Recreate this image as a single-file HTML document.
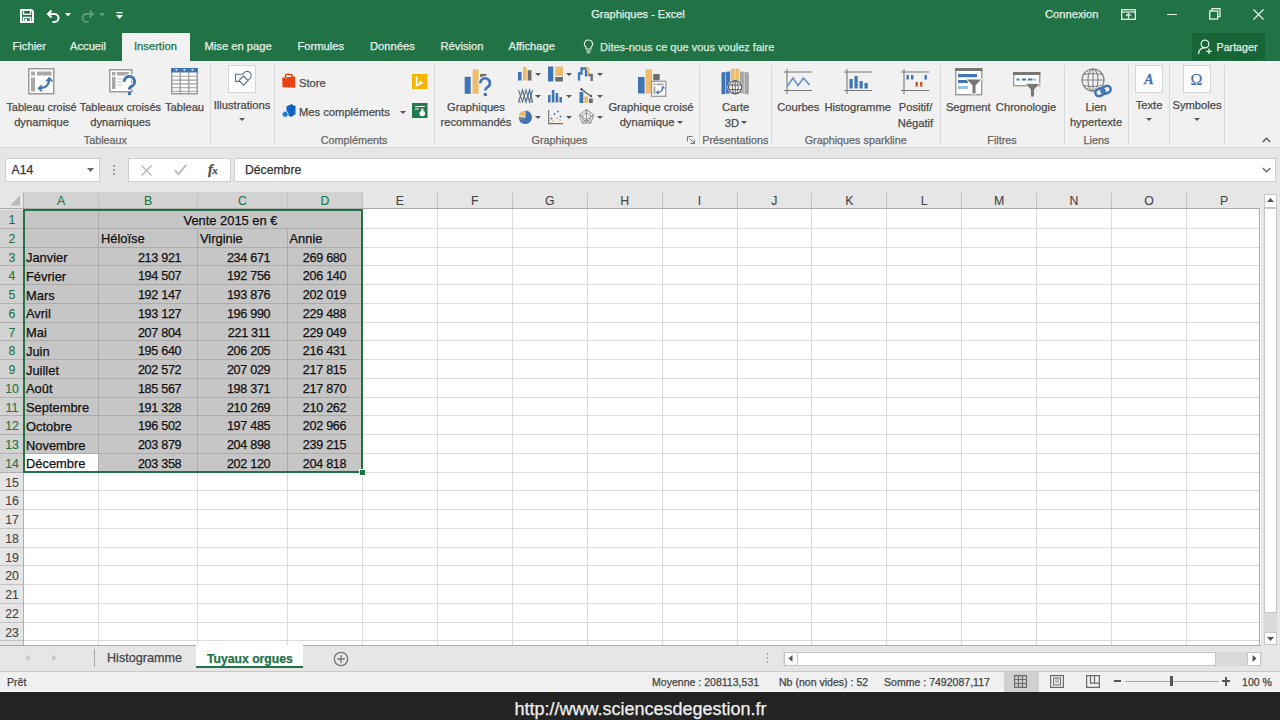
<!DOCTYPE html>
<html><head><meta charset="utf-8"><title>Graphiques - Excel</title>
<style>
html,body{margin:0;padding:0;}
body{width:1280px;height:720px;overflow:hidden;position:relative;background:#E6E6E6;font-family:"Liberation Sans",sans-serif;}
.t{position:absolute;white-space:nowrap;line-height:1.24;-webkit-text-stroke:0.25px currentColor;}
.r{position:absolute;}
svg.r{overflow:visible;}
</style></head><body>
<div class="r" style="left:0px;top:0px;width:1280px;height:61px;background:#217346;"></div>
<div class="r" style="left:0px;top:61px;width:1280px;height:86.5px;background:#F1F1F1;"></div>
<div class="r" style="left:0px;top:147px;width:1280px;height:1.2px;background:#D8D8D8;"></div>
<div class="r" style="left:0px;top:148.2px;width:1280px;height:44px;background:#E6E6E6;"></div>
<svg class="r" style="left:20px;top:9px" width="14" height="14" viewBox="0 0 14 14"><path d="M1 1h10.5l1.5 1.5V13H1z" fill="none" stroke="#fff" stroke-width="1.9"/><rect x="3.5" y="1" width="7" height="4.3" fill="none" stroke="#fff" stroke-width="1.3"/><path d="M3.5 13V8.5h7V13" fill="none" stroke="#fff" stroke-width="1.6"/><rect x="5" y="10" width="2" height="2.5" fill="#fff"/></svg>
<svg class="r" style="left:46px;top:8px" width="16" height="16" viewBox="0 0 16 16"><path d="M5.5 2.5L2 6l3.5 3.5" fill="none" stroke="#fff" stroke-width="2"/><path d="M2.5 6h6a4 4 0 0 1 0 8H6.5" fill="none" stroke="#fff" stroke-width="2"/></svg>
<svg class="r" style="left:65px;top:13px" width="6" height="4" viewBox="0 0 6 4"><path d="M0 0h6L3 3.5z" fill="#fff"/></svg>
<svg class="r" style="left:79px;top:8px" width="16" height="16" viewBox="0 0 16 16"><path d="M10.5 2.5L14 6l-3.5 3.5" fill="none" stroke="#5E9A77" stroke-width="2"/><path d="M13.5 6h-6a4 4 0 0 0 0 8H9.5" fill="none" stroke="#5E9A77" stroke-width="2"/></svg>
<svg class="r" style="left:99px;top:13px" width="6" height="4" viewBox="0 0 6 4"><path d="M0 0h6L3 3.5z" fill="#5E9A77"/></svg>
<svg class="r" style="left:116px;top:12px" width="7" height="8" viewBox="0 0 7 8"><rect x="0.5" y="0" width="6" height="1.3" fill="#fff"/><path d="M0 3h7L3.5 7z" fill="#fff"/></svg>
<div class="t" style="left:488.00px;width:300px;text-align:center;top:7.68px;font-size:11.0px;color:#E3F1E8;font-weight:400;">Graphiques - Excel</div>
<div class="t" style="left:1045px;top:7.56px;font-size:11.2px;color:#E3F1E8;font-weight:400;">Connexion</div>
<svg class="r" style="left:1121px;top:9px" width="15" height="11" viewBox="0 0 15 11"><rect x="0.7" y="0.7" width="13.6" height="9.6" fill="none" stroke="#E3F1E8" stroke-width="1.3"/><path d="M1 3h13" stroke="#E3F1E8" stroke-width="1.2"/><path d="M7.5 9.5V4.5M5 7l2.5-2.5L10 7" fill="none" stroke="#E3F1E8" stroke-width="1.2"/></svg>
<div class="r" style="left:1167px;top:14px;width:10px;height:1.3px;background:#E3F1E8;"></div>
<svg class="r" style="left:1209px;top:8px" width="12" height="12" viewBox="0 0 12 12"><rect x="0.7" y="3" width="8" height="8" fill="none" stroke="#E3F1E8" stroke-width="1.3"/><path d="M3 3V0.7h8V8.7H8.7" fill="none" stroke="#E3F1E8" stroke-width="1.3"/></svg>
<svg class="r" style="left:1253px;top:9px" width="11" height="11" viewBox="0 0 11 11"><path d="M0.5 0.5l10 10M10.5 0.5l-10 10" stroke="#E3F1E8" stroke-width="1.3"/></svg>
<div class="r" style="left:122px;top:33px;width:68px;height:28px;background:#F1F1F1;"></div>
<div class="t" style="left:12.5px;top:40.46px;font-size:11.2px;color:#E3F1E8;font-weight:400;">Fichier</div>
<div class="t" style="left:70px;top:40.46px;font-size:11.2px;color:#E3F1E8;font-weight:400;">Accueil</div>
<div class="t" style="left:134px;top:40.46px;font-size:11.2px;color:#217346;font-weight:400;">Insertion</div>
<div class="t" style="left:204.5px;top:40.46px;font-size:11.2px;color:#E3F1E8;font-weight:400;">Mise en page</div>
<div class="t" style="left:297.5px;top:40.46px;font-size:11.2px;color:#E3F1E8;font-weight:400;">Formules</div>
<div class="t" style="left:370px;top:40.46px;font-size:11.2px;color:#E3F1E8;font-weight:400;">Données</div>
<div class="t" style="left:440.5px;top:40.46px;font-size:11.2px;color:#E3F1E8;font-weight:400;">Révision</div>
<div class="t" style="left:508.5px;top:40.46px;font-size:11.2px;color:#E3F1E8;font-weight:400;">Affichage</div>
<svg class="r" style="left:583px;top:39px" width="11" height="15" viewBox="0 0 11 15"><path d="M5.5 1a4 4 0 0 0-2.5 7.2V10h5V8.2A4 4 0 0 0 5.5 1z" fill="none" stroke="#E3F1E8" stroke-width="1.1"/><path d="M3.2 12h4.6M3.8 13.8h3.4" stroke="#E3F1E8" stroke-width="1.1"/></svg>
<div class="t" style="left:600px;top:40.58px;font-size:11.0px;color:#D8EBDF;font-weight:400;">Dites-nous ce que vous voulez faire</div>
<div class="r" style="left:1192px;top:33px;width:73px;height:27px;background:#176436;"></div>
<svg class="r" style="left:1197px;top:38px" width="17" height="17" viewBox="0 0 17 17"><circle cx="8" cy="6" r="3.8" fill="none" stroke="#E3F1E8" stroke-width="1.3"/><path d="M1.5 16c0-4 3-6.5 6.5-6.5" fill="none" stroke="#E3F1E8" stroke-width="1.3"/><path d="M12 10.5v5.5M9.2 13.3h5.6" stroke="#E3F1E8" stroke-width="1.3"/></svg>
<div class="t" style="left:1216.5px;top:41.37px;font-size:10.7px;color:#E3F1E8;font-weight:400;">Partager</div>
<svg class="r" style="left:28px;top:68px" width="27" height="27" viewBox="0 0 27 27"><rect x="0.75" y="0.75" width="25" height="25" fill="#fff" stroke="#9B9B9B" stroke-width="1.5"/><rect x="3" y="3.5" width="4" height="4" fill="#A8A8A8"/><rect x="9" y="3.5" width="14.5" height="4" fill="#A8A8A8"/><rect x="3" y="9.5" width="4" height="14" fill="#A8A8A8"/><path d="M11 20.3Q21.3 20.3 21.3 10.5" fill="none" stroke="#3F74B5" stroke-width="1.9"/><path d="M18.3 13.3l3-3.3 3 3.3M14 17.3l-3.2 3 3.2 3" fill="none" stroke="#3F74B5" stroke-width="1.8"/></svg>
<div class="t" style="left:-108.50px;width:300px;text-align:center;top:101.24px;font-size:10.9px;color:#4A4A4A;font-weight:400;">Tableau croisé</div>
<div class="t" style="left:-108.50px;width:300px;text-align:center;top:116.06px;font-size:11.2px;color:#4A4A4A;font-weight:400;">dynamique</div>
<svg class="r" style="left:109px;top:69px" width="28" height="28" viewBox="0 0 28 28"><rect x="0.75" y="0.75" width="22" height="22" fill="#fff" stroke="#9B9B9B" stroke-width="1.5"/><rect x="3" y="3" width="3.5" height="3.5" fill="#A8A8A8"/><rect x="8" y="3" width="12" height="3.5" fill="#A8A8A8"/><rect x="3" y="8" width="3.5" height="12" fill="#A8A8A8"/><path d="M8 10h6M8 13h5M8 16h5" stroke="#C8C8C8" stroke-width="1"/><path d="M15.2 12.8a5.2 5.2 0 1 1 7.6 4.4c-1.7 .9-2.4 1.6-2.4 3.3" fill="none" stroke="#fff" stroke-width="5"/><path d="M15.2 12.8a5.2 5.2 0 1 1 7.6 4.4c-1.7 .9-2.4 1.6-2.4 3.3" fill="none" stroke="#3F74B5" stroke-width="3"/><rect x="18.9" y="23" width="3.1" height="3.1" fill="#3F74B5"/></svg>
<div class="t" style="left:-29.60px;width:300px;text-align:center;top:101.24px;font-size:10.9px;color:#4A4A4A;font-weight:400;">Tableaux croisés</div>
<div class="t" style="left:-29.60px;width:300px;text-align:center;top:116.06px;font-size:11.2px;color:#4A4A4A;font-weight:400;">dynamiques</div>
<svg class="r" style="left:171px;top:68px" width="27" height="27" viewBox="0 0 27 27"><rect x="0.75" y="0.75" width="25.5" height="25" fill="#fff" stroke="#9B9B9B" stroke-width="1.5"/><rect x="0" y="0" width="27" height="4.5" fill="#3F74B5"/><path d="M4 1.2h3L5.5 3zM12 1.2h3L13.5 3zM20 1.2h3L21.5 3z" fill="#fff"/><path d="M9.2 4.5V26M17.8 4.5V26" stroke="#9B9B9B" stroke-width="1.3"/><path d="M0 8.3h27M0 12.1h27M0 15.9h27M0 19.7h27M0 23.3h27" stroke="#9B9B9B" stroke-width="1.1"/></svg>
<div class="t" style="left:34.50px;width:300px;text-align:center;top:101.06px;font-size:11.2px;color:#4A4A4A;font-weight:400;">Tableau</div>
<div class="t" style="left:-44.60px;width:300px;text-align:center;top:134.30px;font-size:10.8px;color:#666666;font-weight:400;">Tableaux</div>
<div class="r" style="left:210px;top:65px;width:1px;height:79px;background:#D8D8D8;"></div>
<div class="r" style="left:228px;top:65px;width:28px;height:27.5px;background:#FDFDFD;box-sizing:border-box;border:1px solid #D4D4D4;"></div>
<svg class="r" style="left:233px;top:70px" width="18" height="18" viewBox="0 0 18 18"><path d="M7.5 11.5H2.5V4.3h7.2" fill="none" stroke="#56708F" stroke-width="1.1"/><path d="M9.8 4.6A4.3 4.3 0 1 1 15.2 9.8" fill="none" stroke="#56708F" stroke-width="1.1"/><path d="M10.5 6l4.6 4.6-4.6 4.6-4.6-4.6z" fill="none" stroke="#56708F" stroke-width="1.1"/></svg>
<div class="t" style="left:92.00px;width:300px;text-align:center;top:99.36px;font-size:11.2px;color:#4A4A4A;font-weight:400;">Illustrations</div>
<svg class="r" style="left:239px;top:118.0px" width="6" height="4" viewBox="0 0 6 4"><path d="M0 0h6L3 3z" fill="#555"/></svg>
<div class="r" style="left:274px;top:65px;width:1px;height:79px;background:#D8D8D8;"></div>
<svg class="r" style="left:282px;top:73px" width="14" height="16" viewBox="0 0 14 16"><path d="M3.5 5V2.8Q3.8 0.8 6 1.2l3 0.6Q11 2.3 10.8 4.5V5" fill="none" stroke="#EB3C00" stroke-width="1.4"/><path d="M0.2 4.8L13 3.5 13.3 14.8 0.5 14.3z" fill="#E8430E"/><path d="M3.5 5.5l1.5-0.2" stroke="#F7A07A" stroke-width="1"/></svg>
<div class="t" style="left:299px;top:76.66px;font-size:11.2px;color:#4A4A4A;font-weight:400;">Store</div>
<svg class="r" style="left:282px;top:104px" width="14" height="14" viewBox="0 0 14 14"><path d="M4.5 2.2L9.5 0.3 13.5 2.3V10.3L9.5 12.8 4.5 11z" fill="#1168C4"/><path d="M9.5 0.3V6.5L13.5 2.3M9.5 6.5V12.8" stroke="#0A4F9A" stroke-width="0.6" fill="none"/><circle cx="3.2" cy="10.3" r="3" fill="#1A7AD8" stroke="#F1F1F1" stroke-width="0.8"/></svg>
<div class="t" style="left:299px;top:105.86px;font-size:11.2px;color:#4A4A4A;font-weight:400;">Mes compléments</div>
<svg class="r" style="left:399.5px;top:110.5px" width="6" height="4" viewBox="0 0 6 4"><path d="M0 0h6L3 3z" fill="#555"/></svg>
<svg class="r" style="left:412px;top:74px" width="16" height="15" viewBox="0 0 16 15"><rect x="0" y="0" width="15.5" height="15" fill="#F4B400"/><path d="M4.6 2.5v9.3l5.6-3-3-1.3" fill="none" stroke="#fff" stroke-width="1.7" stroke-linejoin="round"/></svg>
<svg class="r" style="left:412px;top:103px" width="16" height="15" viewBox="0 0 16 15"><rect x="0" y="0" width="15.5" height="15" fill="#1F7C4A"/><path d="M3 3.5h10M3 6h4" stroke="#fff" stroke-width="1.2"/><circle cx="10.3" cy="10.5" r="2.8" fill="#fff"/><circle cx="10.3" cy="6.7" r="1.3" fill="#fff"/></svg>
<div class="t" style="left:204.00px;width:300px;text-align:center;top:134.00px;font-size:10.8px;color:#666666;font-weight:400;">Compléments</div>
<div class="r" style="left:434px;top:65px;width:1px;height:79px;background:#D8D8D8;"></div>
<svg class="r" style="left:464px;top:69px" width="28" height="28" viewBox="0 0 28 28"><rect x="0.7" y="7.8" width="6" height="17" fill="#3F74B5"/><rect x="8.6" y="0.5" width="6" height="24.3" fill="#EDBB6A"/><rect x="16.2" y="4.9" width="6" height="3.5" fill="#6E6E6E"/><path d="M16.3 14.2a4.8 4.8 0 1 1 7.3 4c-1.6 .9-2.3 1.6-2.3 3.2" fill="none" stroke="#F1F1F1" stroke-width="4.6"/><path d="M16.3 14.2a4.8 4.8 0 1 1 7.3 4c-1.6 .9-2.3 1.6-2.3 3.2" fill="none" stroke="#3F74B5" stroke-width="2.6"/><rect x="19.8" y="24" width="3" height="3" fill="#3F74B5"/></svg>
<div class="t" style="left:326.00px;width:300px;text-align:center;top:101.06px;font-size:11.2px;color:#4A4A4A;font-weight:400;">Graphiques</div>
<div class="t" style="left:326.00px;width:300px;text-align:center;top:116.06px;font-size:11.2px;color:#4A4A4A;font-weight:400;">recommandés</div>
<svg class="r" style="left:518px;top:66px" width="16" height="16" viewBox="0 0 16 16"><rect x="0" y="6" width="3.6" height="8.5" fill="#3F74B5"/><rect x="5" y="1" width="3.7" height="13.5" fill="#EDBB6A"/><rect x="9.7" y="4.2" width="3.8" height="10.3" fill="#6E6E6E"/></svg>
<svg class="r" style="left:535.3px;top:72.5px" width="6" height="4" viewBox="0 0 6 4"><path d="M0 0h6L3 3z" fill="#555"/></svg>
<svg class="r" style="left:548px;top:66px" width="16" height="16" viewBox="0 0 16 16"><rect x="0" y="0.5" width="5.3" height="15" fill="#3F74B5"/><rect x="7.3" y="0.5" width="7.7" height="9.3" fill="#EDBB6A"/><rect x="7.3" y="11" width="7.7" height="4.5" fill="#6E6E6E"/></svg>
<svg class="r" style="left:566.4px;top:72.5px" width="6" height="4" viewBox="0 0 6 4"><path d="M0 0h6L3 3z" fill="#555"/></svg>
<svg class="r" style="left:579px;top:66px" width="16" height="16" viewBox="0 0 16 16"><path d="M0 14.5V7.5h2.5v-5h4.5v8" fill="none" stroke="#3F74B5" stroke-width="2.3"/><path d="M7 2.5h2.2v7.5" fill="none" stroke="#EDBB6A" stroke-width="2.3"/><path d="M9.5 9h3.2v6" fill="none" stroke="#6E6E6E" stroke-width="2.3"/></svg>
<svg class="r" style="left:597.3px;top:72.5px" width="6" height="4" viewBox="0 0 6 4"><path d="M0 0h6L3 3z" fill="#555"/></svg>
<svg class="r" style="left:518px;top:88px" width="16" height="16" viewBox="0 0 16 16"><path d="M0.5 14L4.5 2 8 14 11.5 2 14.5 14" fill="none" stroke="#3F74B5" stroke-width="1.2"/><path d="M0.5 2L4.5 14 8 2 11.5 14 14.5 2" fill="none" stroke="#6E6E6E" stroke-width="1.1"/><path d="M0 14h3M12 14h3" stroke="#6E6E6E" stroke-width="1"/></svg>
<svg class="r" style="left:535.3px;top:94.5px" width="6" height="4" viewBox="0 0 6 4"><path d="M0 0h6L3 3z" fill="#555"/></svg>
<svg class="r" style="left:548px;top:88px" width="16" height="16" viewBox="0 0 16 16"><rect x="0" y="7" width="2.6" height="7.5" fill="#3F74B5"/><rect x="3.8" y="2" width="2.6" height="12.5" fill="#3F74B5"/><rect x="7.6" y="5" width="2.6" height="9.5" fill="#3F74B5"/><rect x="11.4" y="9" width="2.6" height="5.5" fill="#3F74B5"/></svg>
<svg class="r" style="left:566.4px;top:94.5px" width="6" height="4" viewBox="0 0 6 4"><path d="M0 0h6L3 3z" fill="#555"/></svg>
<svg class="r" style="left:579px;top:88px" width="16" height="16" viewBox="0 0 16 16"><rect x="0.5" y="4" width="3.8" height="11" fill="#3F74B5"/><rect x="5.3" y="8.5" width="3.8" height="6.5" fill="#EDBB6A"/><rect x="10" y="10.5" width="3.8" height="4.5" fill="#6E6E6E"/><path d="M2.5 1.2L8 5.5 12 8" fill="none" stroke="#555" stroke-width="1.2"/><circle cx="2.5" cy="1.2" r="1.2" fill="#555"/><circle cx="12" cy="8" r="1.2" fill="#555"/></svg>
<svg class="r" style="left:597.3px;top:94.5px" width="6" height="4" viewBox="0 0 6 4"><path d="M0 0h6L3 3z" fill="#555"/></svg>
<svg class="r" style="left:518px;top:109px" width="16" height="16" viewBox="0 0 16 16"><path d="M7.5 1.5A6.8 6.8 0 1 1 1.2 11.5L7.5 8.3z" fill="#3F74B5"/><path d="M7 1.5A6.5 6.5 0 0 0 0.8 7.3H7z" fill="#EDBB6A"/><path d="M0.8 8.3h6L1.5 11.2A6.5 6.5 0 0 1 0.8 8.3z" fill="#6E6E6E"/></svg>
<svg class="r" style="left:535.3px;top:115.5px" width="6" height="4" viewBox="0 0 6 4"><path d="M0 0h6L3 3z" fill="#555"/></svg>
<svg class="r" style="left:548px;top:109px" width="16" height="16" viewBox="0 0 16 16"><path d="M0.7 1v13.6H15" fill="none" stroke="#6E6E6E" stroke-width="1.1"/><circle cx="3.5" cy="9.5" r="0.9" fill="#3F74B5"/><circle cx="6.5" cy="5" r="0.9" fill="#3F74B5"/><circle cx="10" cy="2.5" r="0.9" fill="#3F74B5"/><circle cx="12.5" cy="7.5" r="0.9" fill="#3F74B5"/><circle cx="5" cy="11.5" r="0.9" fill="#EDBB6A"/><circle cx="9" cy="9" r="0.9" fill="#EDBB6A"/><circle cx="12" cy="11" r="0.9" fill="#EDBB6A"/></svg>
<svg class="r" style="left:566.4px;top:115.5px" width="6" height="4" viewBox="0 0 6 4"><path d="M0 0h6L3 3z" fill="#555"/></svg>
<svg class="r" style="left:579px;top:109px" width="16" height="16" viewBox="0 0 16 16"><path d="M7.5 0.5L14.5 5.8 11.8 14H3.2L0.5 5.8z" fill="none" stroke="#888" stroke-width="1"/><path d="M7.5 0.5V14M0.5 5.8L11.8 14M14.5 5.8L3.2 14M7.5 3.5l4.5 3.3-1.7 4.8H4.7L3 6.8z" fill="none" stroke="#888" stroke-width="0.9"/></svg>
<svg class="r" style="left:597.3px;top:115.5px" width="6" height="4" viewBox="0 0 6 4"><path d="M0 0h6L3 3z" fill="#555"/></svg>
<svg class="r" style="left:637px;top:68px" width="30" height="30" viewBox="0 0 30 30"><rect x="1" y="9" width="6.6" height="16.5" fill="#3F74B5"/><rect x="8.7" y="1.3" width="6.4" height="24.2" fill="#EDBB6A"/><rect x="16.2" y="6" width="6.5" height="6.3" fill="#6E6E6E"/><rect x="14.6" y="13.3" width="14.2" height="15" fill="#fff" stroke="#9B9B9B" stroke-width="1.3"/><rect x="16.5" y="15.3" width="2" height="2" fill="#A8A8A8"/><rect x="19.5" y="15.3" width="7" height="2" fill="#A8A8A8"/><rect x="16.5" y="18.5" width="2" height="7.5" fill="#A8A8A8"/><path d="M20 24.5c3 0 5.5-1.5 6-5" fill="none" stroke="#3F74B5" stroke-width="1.3"/><path d="M24.5 20.5l1.5-2 1.5 2M21.5 22.8l-1.8 1.7 1.8 1.5" fill="none" stroke="#3F74B5" stroke-width="1.2"/></svg>
<div class="t" style="left:501.00px;width:300px;text-align:center;top:101.06px;font-size:11.2px;color:#4A4A4A;font-weight:400;">Graphique croisé</div>
<div class="t" style="left:497.00px;width:300px;text-align:center;top:116.06px;font-size:11.2px;color:#4A4A4A;font-weight:400;">dynamique</div>
<svg class="r" style="left:676.5px;top:120.5px" width="6" height="4" viewBox="0 0 6 4"><path d="M0 0h6L3 3z" fill="#555"/></svg>
<div class="t" style="left:409.50px;width:300px;text-align:center;top:134.30px;font-size:10.8px;color:#666666;font-weight:400;">Graphiques</div>
<svg class="r" style="left:687px;top:136px" width="8" height="8" viewBox="0 0 8 8"><path d="M0.5 0.5h5M0.5 0.5v5" stroke="#777" stroke-width="1"/><path d="M2.5 2.5l5 5M7.5 3.5v4h-4" fill="none" stroke="#777" stroke-width="1"/></svg>
<div class="r" style="left:699px;top:65px;width:1px;height:79px;background:#D8D8D8;"></div>
<svg class="r" style="left:721px;top:68px" width="29" height="28" viewBox="0 0 29 28"><path d="M0.5 4.5L9.2 3.2V25.2L0.5 26.5z" fill="#3F74B5"/><path d="M4.6 4v22" stroke="#A9CBEA" stroke-width="0.9"/><path d="M10 0.8h8.3V24H10z" fill="#EDBB6A"/><path d="M14 0.8v23" stroke="#F6DDA8" stroke-width="0.9"/><path d="M19 3.2L27.8 4.5V26.5L19 25.2z" fill="#A6A6A6"/><path d="M23.3 4v22" stroke="#D6D6D6" stroke-width="0.9"/><circle cx="14.2" cy="19.3" r="7.8" fill="#F1F1F1"/><circle cx="14.2" cy="19.3" r="6.6" fill="#fff" stroke="#5F5F5F" stroke-width="1.3"/><ellipse cx="14.2" cy="19.3" rx="2.9" ry="6.6" fill="none" stroke="#5F5F5F" stroke-width="1"/><path d="M7.8 17h12.8M7.8 21.6h12.8M14.2 12.7v13.2" stroke="#5F5F5F" stroke-width="1"/></svg>
<div class="t" style="left:585.60px;width:300px;text-align:center;top:101.06px;font-size:11.2px;color:#4A4A4A;font-weight:400;">Carte</div>
<div class="t" style="left:582.00px;width:300px;text-align:center;top:116.56px;font-size:11.2px;color:#4A4A4A;font-weight:400;">3D</div>
<svg class="r" style="left:740.5px;top:121.0px" width="6" height="4" viewBox="0 0 6 4"><path d="M0 0h6L3 3z" fill="#555"/></svg>
<div class="t" style="left:585.30px;width:300px;text-align:center;top:134.00px;font-size:10.8px;color:#666666;font-weight:400;">Présentations</div>
<div class="r" style="left:771px;top:65px;width:1px;height:79px;background:#D8D8D8;"></div>
<svg class="r" style="left:784px;top:69px" width="29" height="26" viewBox="0 0 29 26"><path d="M3 0v25M0 3h28M0 21.5h28" stroke="#777" stroke-width="1.1"/><path d="M3.5 17l5.5-8 5 7.5 5.5-7.5 6 7" fill="none" stroke="#5B8BC9" stroke-width="1.4"/></svg>
<div class="t" style="left:648.30px;width:300px;text-align:center;top:101.06px;font-size:11.2px;color:#4A4A4A;font-weight:400;">Courbes</div>
<svg class="r" style="left:844px;top:69px" width="29" height="26" viewBox="0 0 29 26"><path d="M3 0v25M0 3h28M0 21.5h28" stroke="#777" stroke-width="1.1"/><rect x="5.5" y="10" width="3.2" height="9.5" fill="#3F74B5"/><rect x="10.5" y="7" width="3.2" height="12.5" fill="#3F74B5"/><rect x="15.5" y="12" width="3.2" height="7.5" fill="#3F74B5"/><rect x="20.5" y="14" width="3.2" height="5.5" fill="#3F74B5"/></svg>
<div class="t" style="left:707.70px;width:300px;text-align:center;top:101.06px;font-size:11.2px;color:#4A4A4A;font-weight:400;">Histogramme</div>
<svg class="r" style="left:901px;top:69px" width="29" height="26" viewBox="0 0 29 26"><path d="M3 0v25M0 3h28M0 21.5h28" stroke="#777" stroke-width="1.1"/><rect x="5.5" y="6" width="2.4" height="4.5" fill="#3F74B5"/><rect x="10" y="6" width="2.4" height="4.5" fill="#3F74B5"/><rect x="14.5" y="13" width="2.4" height="4.5" fill="#D2562B"/><rect x="19" y="13" width="2.4" height="4.5" fill="#D2562B"/><rect x="23.5" y="6" width="2.4" height="4.5" fill="#3F74B5"/></svg>
<div class="t" style="left:765.50px;width:300px;text-align:center;top:101.06px;font-size:11.2px;color:#4A4A4A;font-weight:400;">Positif/</div>
<div class="t" style="left:765.50px;width:300px;text-align:center;top:116.56px;font-size:11.2px;color:#4A4A4A;font-weight:400;">Négatif</div>
<div class="t" style="left:705.70px;width:300px;text-align:center;top:134.00px;font-size:10.8px;color:#666666;font-weight:400;">Graphiques sparkline</div>
<div class="r" style="left:940px;top:65px;width:1px;height:79px;background:#D8D8D8;"></div>
<svg class="r" style="left:955px;top:68px" width="28" height="28" viewBox="0 0 28 28"><rect x="0.7" y="0.7" width="26" height="26" fill="#fff" stroke="#9B9B9B" stroke-width="1.4"/><rect x="0" y="0" width="27.4" height="3" fill="#777"/><rect x="3" y="6" width="19" height="3.2" fill="#3F74B5"/><rect x="3" y="12" width="10" height="3" fill="#3F74B5"/><rect x="3" y="18" width="10" height="3" fill="#9CC3E6"/><path d="M11 11h16l-6 6.5v8.5h-4v-8.5z" fill="#777" stroke="#fff" stroke-width="1"/></svg>
<div class="t" style="left:818.30px;width:300px;text-align:center;top:101.06px;font-size:11.2px;color:#4A4A4A;font-weight:400;">Segment</div>
<svg class="r" style="left:1013px;top:72px" width="28" height="26" viewBox="0 0 28 26"><rect x="0.7" y="0.7" width="26" height="13" fill="#fff" stroke="#9B9B9B" stroke-width="1.4"/><rect x="0" y="0" width="27.4" height="3" fill="#777"/><path d="M3.5 7.5h3M9 7.5h4M15 7.5h4" stroke="#3F74B5" stroke-width="2"/><path d="M19 7.5h4" stroke="#9CC3E6" stroke-width="2"/><path d="M12 11.5h15l-5.5 6v7.5h-4v-7.5z" fill="#777" stroke="#F1F1F1" stroke-width="1"/></svg>
<div class="t" style="left:876.00px;width:300px;text-align:center;top:101.06px;font-size:11.2px;color:#4A4A4A;font-weight:400;">Chronologie</div>
<div class="t" style="left:852.00px;width:300px;text-align:center;top:134.00px;font-size:10.8px;color:#666666;font-weight:400;">Filtres</div>
<div class="r" style="left:1064px;top:65px;width:1px;height:79px;background:#D8D8D8;"></div>
<svg class="r" style="left:1081px;top:68px" width="31" height="30" viewBox="0 0 31 30"><circle cx="12" cy="12" r="11" fill="none" stroke="#808080" stroke-width="1.2"/><ellipse cx="12" cy="12" rx="5" ry="11" fill="none" stroke="#808080" stroke-width="1.1"/><path d="M1 12h22M12 1v22M3.2 6.5Q12 4.5 20.8 6.5M3.2 17.5Q12 19.5 20.8 17.5" fill="none" stroke="#808080" stroke-width="1.1"/><path d="M13 29L15 19.5 30 16 30 29z" fill="#F1F1F1"/><g transform="rotate(-22 22 23)"><rect x="14" y="19.5" width="9.5" height="7" rx="3.5" fill="none" stroke="#3F74B5" stroke-width="2.5"/><rect x="20.5" y="19.5" width="9.5" height="7" rx="3.5" fill="none" stroke="#3F74B5" stroke-width="2.5"/></g></svg>
<div class="t" style="left:946.00px;width:300px;text-align:center;top:101.06px;font-size:11.2px;color:#4A4A4A;font-weight:400;">Lien</div>
<div class="t" style="left:946.00px;width:300px;text-align:center;top:116.46px;font-size:11.2px;color:#4A4A4A;font-weight:400;">hypertexte</div>
<div class="t" style="left:946.40px;width:300px;text-align:center;top:134.00px;font-size:10.8px;color:#666666;font-weight:400;">Liens</div>
<div class="r" style="left:1128px;top:65px;width:1px;height:79px;background:#D8D8D8;"></div>
<div class="r" style="left:1135px;top:65px;width:28px;height:28px;background:#FDFDFD;box-sizing:border-box;border:1px solid #D4D4D4;"></div>
<div class="t" style="left:1129.00px;width:40px;text-align:center;top:71.32px;font-size:14px;color:#3F74B5;font-weight:700;font-family:Liberation Serif,serif;"><i>A</i></div>
<div class="t" style="left:999.00px;width:300px;text-align:center;top:99.06px;font-size:11.2px;color:#4A4A4A;font-weight:400;">Texte</div>
<svg class="r" style="left:1146px;top:118.3px" width="6" height="4" viewBox="0 0 6 4"><path d="M0 0h6L3 3z" fill="#555"/></svg>
<div class="r" style="left:1169px;top:65px;width:1px;height:79px;background:#D8D8D8;"></div>
<div class="r" style="left:1183px;top:65px;width:28px;height:28px;background:#FDFDFD;box-sizing:border-box;border:1px solid #D4D4D4;"></div>
<div class="t" style="left:1176.50px;width:40px;text-align:center;top:69.58px;font-size:16px;color:#3F6FA8;font-weight:400;font-family:Liberation Serif,serif;-webkit-text-stroke:0.15px currentColor;">Ω</div>
<div class="t" style="left:1047.00px;width:300px;text-align:center;top:99.06px;font-size:11.2px;color:#4A4A4A;font-weight:400;">Symboles</div>
<svg class="r" style="left:1194px;top:118.3px" width="6" height="4" viewBox="0 0 6 4"><path d="M0 0h6L3 3z" fill="#555"/></svg>
<div class="r" style="left:1224px;top:65px;width:1px;height:79px;background:#D8D8D8;"></div>
<svg class="r" style="left:1262px;top:137px" width="9" height="6" viewBox="0 0 9 6"><path d="M0.8 5L4.5 1.3 8.2 5" fill="none" stroke="#555" stroke-width="1.4"/></svg>
<div class="r" style="left:5px;top:158px;width:95px;height:24px;background:#fff;box-sizing:border-box;border:1px solid #D0D0D0;"></div>
<div class="t" style="left:11.5px;top:163.34px;font-size:12.2px;color:#333;font-weight:400;">A14</div>
<svg class="r" style="left:87px;top:168px" width="8" height="5" viewBox="0 0 8 5"><path d="M0 0h7L3.5 4z" fill="#666"/></svg>
<div class="r" style="left:113.2px;top:164.6px;width:2px;height:2px;background:#A0A0A0;"></div>
<div class="r" style="left:113.2px;top:168.6px;width:2px;height:2px;background:#A0A0A0;"></div>
<div class="r" style="left:113.2px;top:172.6px;width:2px;height:2px;background:#A0A0A0;"></div>
<div class="r" style="left:128px;top:158px;width:103px;height:24px;background:#fff;box-sizing:border-box;border:1px solid #D0D0D0;"></div>
<svg class="r" style="left:141px;top:165px" width="11" height="11" viewBox="0 0 11 11"><path d="M0.5 0.5l10 10M10.5 0.5l-10 10" stroke="#B0B0B0" stroke-width="1.2"/></svg>
<svg class="r" style="left:174px;top:164px" width="13" height="11" viewBox="0 0 13 11"><path d="M0.8 6.2l3.8 3.8L12.2 0.8" fill="none" stroke="#BDBDBD" stroke-width="2"/></svg>
<div class="t" style="left:208px;top:160.91px;font-size:14.5px;color:#505050;font-weight:700;font-family:Liberation Serif,serif;letter-spacing:-0.5px;"><i>f</i><span style="font-size:11px;position:relative;top:0.5px"><i>x</i></span></div>
<div class="r" style="left:234px;top:158px;width:1042px;height:24px;background:#fff;box-sizing:border-box;border:1px solid #D0D0D0;"></div>
<div class="t" style="left:245px;top:163.34px;font-size:12.2px;color:#333;font-weight:400;">Décembre</div>
<svg class="r" style="left:1262px;top:167px" width="9" height="6" viewBox="0 0 9 6"><path d="M0.8 1L4.5 4.7 8.2 1" fill="none" stroke="#666" stroke-width="1.4"/></svg>
<div class="r" style="left:0px;top:191.5px;width:1261px;height:453.5px;background:#FFFFFF;"></div>
<div class="r" style="left:0px;top:191.5px;width:1261px;height:16.5px;background:#E6E6E6;"></div>
<div class="r" style="left:0px;top:191.5px;width:23.5px;height:453.5px;background:#E6E6E6;"></div>
<div class="r" style="left:23.5px;top:191.5px;width:339.0px;height:16.5px;background:#D2D2D2;"></div>
<div class="r" style="left:0px;top:209.5px;width:23.5px;height:262.5px;background:#D2D2D2;"></div>
<svg class="r" style="left:9px;top:195px" width="12" height="11" viewBox="0 0 12 11"><path d="M11 0.5V10.5H1z" fill="#B8B8B8"/></svg>
<div class="r" style="left:23.5px;top:209.5px;width:339.0px;height:262.5px;background:#C6C6C6;"></div>
<div class="r" style="left:23.5px;top:453.25px;width:75.0px;height:18.75px;background:#FFFFFF;"></div>
<div class="r" style="left:98.0px;top:192.5px;width:1px;height:15.5px;background:#C3C3C3;"></div>
<div class="r" style="left:98.0px;top:228.25px;width:1px;height:243.75px;background:#ABABAB;"></div>
<div class="r" style="left:98.0px;top:209.5px;width:1px;height:18.75px;background:#ABABAB;"></div>
<div class="r" style="left:98.0px;top:472.0px;width:1px;height:173.0px;background:#DADADA;"></div>
<div class="r" style="left:197.0px;top:192.5px;width:1px;height:15.5px;background:#C3C3C3;"></div>
<div class="r" style="left:197.0px;top:228.25px;width:1px;height:243.75px;background:#ABABAB;"></div>
<div class="r" style="left:197.0px;top:472.0px;width:1px;height:173.0px;background:#DADADA;"></div>
<div class="r" style="left:287.0px;top:192.5px;width:1px;height:15.5px;background:#C3C3C3;"></div>
<div class="r" style="left:287.0px;top:228.25px;width:1px;height:243.75px;background:#ABABAB;"></div>
<div class="r" style="left:287.0px;top:472.0px;width:1px;height:173.0px;background:#DADADA;"></div>
<div class="r" style="left:362.0px;top:192.5px;width:1px;height:15.5px;background:#C3C3C3;"></div>
<div class="r" style="left:362.0px;top:208px;width:1px;height:437px;background:#DADADA;"></div>
<div class="r" style="left:436.9px;top:192.5px;width:1px;height:15.5px;background:#C3C3C3;"></div>
<div class="r" style="left:436.9px;top:208px;width:1px;height:437px;background:#DADADA;"></div>
<div class="r" style="left:511.79999999999995px;top:192.5px;width:1px;height:15.5px;background:#C3C3C3;"></div>
<div class="r" style="left:511.79999999999995px;top:208px;width:1px;height:437px;background:#DADADA;"></div>
<div class="r" style="left:586.7px;top:192.5px;width:1px;height:15.5px;background:#C3C3C3;"></div>
<div class="r" style="left:586.7px;top:208px;width:1px;height:437px;background:#DADADA;"></div>
<div class="r" style="left:661.6px;top:192.5px;width:1px;height:15.5px;background:#C3C3C3;"></div>
<div class="r" style="left:661.6px;top:208px;width:1px;height:437px;background:#DADADA;"></div>
<div class="r" style="left:736.5px;top:192.5px;width:1px;height:15.5px;background:#C3C3C3;"></div>
<div class="r" style="left:736.5px;top:208px;width:1px;height:437px;background:#DADADA;"></div>
<div class="r" style="left:811.4000000000001px;top:192.5px;width:1px;height:15.5px;background:#C3C3C3;"></div>
<div class="r" style="left:811.4000000000001px;top:208px;width:1px;height:437px;background:#DADADA;"></div>
<div class="r" style="left:886.3000000000001px;top:192.5px;width:1px;height:15.5px;background:#C3C3C3;"></div>
<div class="r" style="left:886.3000000000001px;top:208px;width:1px;height:437px;background:#DADADA;"></div>
<div class="r" style="left:961.2px;top:192.5px;width:1px;height:15.5px;background:#C3C3C3;"></div>
<div class="r" style="left:961.2px;top:208px;width:1px;height:437px;background:#DADADA;"></div>
<div class="r" style="left:1036.1px;top:192.5px;width:1px;height:15.5px;background:#C3C3C3;"></div>
<div class="r" style="left:1036.1px;top:208px;width:1px;height:437px;background:#DADADA;"></div>
<div class="r" style="left:1111.0px;top:192.5px;width:1px;height:15.5px;background:#C3C3C3;"></div>
<div class="r" style="left:1111.0px;top:208px;width:1px;height:437px;background:#DADADA;"></div>
<div class="r" style="left:1185.9px;top:192.5px;width:1px;height:15.5px;background:#C3C3C3;"></div>
<div class="r" style="left:1185.9px;top:208px;width:1px;height:437px;background:#DADADA;"></div>
<div class="r" style="left:1259px;top:208px;width:1.2px;height:437px;background:#ABABAB;"></div>
<div class="r" style="left:23.5px;top:227.75px;width:339.0px;height:1px;background:#ABABAB;"></div>
<div class="r" style="left:362.5px;top:227.75px;width:896.5px;height:1px;background:#DADADA;"></div>
<div class="r" style="left:0px;top:227.75px;width:23.5px;height:1px;background:#B0B0B0;"></div>
<div class="r" style="left:23.5px;top:246.5px;width:339.0px;height:1px;background:#ABABAB;"></div>
<div class="r" style="left:362.5px;top:246.5px;width:896.5px;height:1px;background:#DADADA;"></div>
<div class="r" style="left:0px;top:246.5px;width:23.5px;height:1px;background:#B0B0B0;"></div>
<div class="r" style="left:23.5px;top:265.25px;width:339.0px;height:1px;background:#ABABAB;"></div>
<div class="r" style="left:362.5px;top:265.25px;width:896.5px;height:1px;background:#DADADA;"></div>
<div class="r" style="left:0px;top:265.25px;width:23.5px;height:1px;background:#B0B0B0;"></div>
<div class="r" style="left:23.5px;top:284.0px;width:339.0px;height:1px;background:#ABABAB;"></div>
<div class="r" style="left:362.5px;top:284.0px;width:896.5px;height:1px;background:#DADADA;"></div>
<div class="r" style="left:0px;top:284.0px;width:23.5px;height:1px;background:#B0B0B0;"></div>
<div class="r" style="left:23.5px;top:302.75px;width:339.0px;height:1px;background:#ABABAB;"></div>
<div class="r" style="left:362.5px;top:302.75px;width:896.5px;height:1px;background:#DADADA;"></div>
<div class="r" style="left:0px;top:302.75px;width:23.5px;height:1px;background:#B0B0B0;"></div>
<div class="r" style="left:23.5px;top:321.5px;width:339.0px;height:1px;background:#ABABAB;"></div>
<div class="r" style="left:362.5px;top:321.5px;width:896.5px;height:1px;background:#DADADA;"></div>
<div class="r" style="left:0px;top:321.5px;width:23.5px;height:1px;background:#B0B0B0;"></div>
<div class="r" style="left:23.5px;top:340.25px;width:339.0px;height:1px;background:#ABABAB;"></div>
<div class="r" style="left:362.5px;top:340.25px;width:896.5px;height:1px;background:#DADADA;"></div>
<div class="r" style="left:0px;top:340.25px;width:23.5px;height:1px;background:#B0B0B0;"></div>
<div class="r" style="left:23.5px;top:359.0px;width:339.0px;height:1px;background:#ABABAB;"></div>
<div class="r" style="left:362.5px;top:359.0px;width:896.5px;height:1px;background:#DADADA;"></div>
<div class="r" style="left:0px;top:359.0px;width:23.5px;height:1px;background:#B0B0B0;"></div>
<div class="r" style="left:23.5px;top:377.75px;width:339.0px;height:1px;background:#ABABAB;"></div>
<div class="r" style="left:362.5px;top:377.75px;width:896.5px;height:1px;background:#DADADA;"></div>
<div class="r" style="left:0px;top:377.75px;width:23.5px;height:1px;background:#B0B0B0;"></div>
<div class="r" style="left:23.5px;top:396.5px;width:339.0px;height:1px;background:#ABABAB;"></div>
<div class="r" style="left:362.5px;top:396.5px;width:896.5px;height:1px;background:#DADADA;"></div>
<div class="r" style="left:0px;top:396.5px;width:23.5px;height:1px;background:#B0B0B0;"></div>
<div class="r" style="left:23.5px;top:415.25px;width:339.0px;height:1px;background:#ABABAB;"></div>
<div class="r" style="left:362.5px;top:415.25px;width:896.5px;height:1px;background:#DADADA;"></div>
<div class="r" style="left:0px;top:415.25px;width:23.5px;height:1px;background:#B0B0B0;"></div>
<div class="r" style="left:23.5px;top:434.0px;width:339.0px;height:1px;background:#ABABAB;"></div>
<div class="r" style="left:362.5px;top:434.0px;width:896.5px;height:1px;background:#DADADA;"></div>
<div class="r" style="left:0px;top:434.0px;width:23.5px;height:1px;background:#B0B0B0;"></div>
<div class="r" style="left:23.5px;top:452.75px;width:339.0px;height:1px;background:#ABABAB;"></div>
<div class="r" style="left:362.5px;top:452.75px;width:896.5px;height:1px;background:#DADADA;"></div>
<div class="r" style="left:0px;top:452.75px;width:23.5px;height:1px;background:#B0B0B0;"></div>
<div class="r" style="left:23.5px;top:471.5px;width:339.0px;height:1px;background:#ABABAB;"></div>
<div class="r" style="left:362.5px;top:471.5px;width:896.5px;height:1px;background:#DADADA;"></div>
<div class="r" style="left:0px;top:471.5px;width:23.5px;height:1px;background:#B0B0B0;"></div>
<div class="r" style="left:23.5px;top:490.25px;width:1235.5px;height:1px;background:#DADADA;"></div>
<div class="r" style="left:0px;top:490.25px;width:23.5px;height:1px;background:#C3C3C3;"></div>
<div class="r" style="left:23.5px;top:509.0px;width:1235.5px;height:1px;background:#DADADA;"></div>
<div class="r" style="left:0px;top:509.0px;width:23.5px;height:1px;background:#C3C3C3;"></div>
<div class="r" style="left:23.5px;top:527.75px;width:1235.5px;height:1px;background:#DADADA;"></div>
<div class="r" style="left:0px;top:527.75px;width:23.5px;height:1px;background:#C3C3C3;"></div>
<div class="r" style="left:23.5px;top:546.5px;width:1235.5px;height:1px;background:#DADADA;"></div>
<div class="r" style="left:0px;top:546.5px;width:23.5px;height:1px;background:#C3C3C3;"></div>
<div class="r" style="left:23.5px;top:565.25px;width:1235.5px;height:1px;background:#DADADA;"></div>
<div class="r" style="left:0px;top:565.25px;width:23.5px;height:1px;background:#C3C3C3;"></div>
<div class="r" style="left:23.5px;top:584.0px;width:1235.5px;height:1px;background:#DADADA;"></div>
<div class="r" style="left:0px;top:584.0px;width:23.5px;height:1px;background:#C3C3C3;"></div>
<div class="r" style="left:23.5px;top:602.75px;width:1235.5px;height:1px;background:#DADADA;"></div>
<div class="r" style="left:0px;top:602.75px;width:23.5px;height:1px;background:#C3C3C3;"></div>
<div class="r" style="left:23.5px;top:621.5px;width:1235.5px;height:1px;background:#DADADA;"></div>
<div class="r" style="left:0px;top:621.5px;width:23.5px;height:1px;background:#C3C3C3;"></div>
<div class="r" style="left:23.5px;top:640.25px;width:1235.5px;height:1px;background:#DADADA;"></div>
<div class="r" style="left:0px;top:640.25px;width:23.5px;height:1px;background:#C3C3C3;"></div>
<div class="r" style="left:0px;top:208.3px;width:1260px;height:1.2px;background:#ABABAB;"></div>
<div class="r" style="left:23px;top:191.5px;width:1px;height:453.5px;background:#AFAFAF;"></div>
<div class="t" style="left:-89.00px;width:300px;text-align:center;top:193.67px;font-size:12.3px;color:#217346;font-weight:400;-webkit-text-stroke:0.1px currentColor;">A</div>
<div class="t" style="left:-2.00px;width:300px;text-align:center;top:193.67px;font-size:12.3px;color:#217346;font-weight:400;-webkit-text-stroke:0.1px currentColor;">B</div>
<div class="t" style="left:92.50px;width:300px;text-align:center;top:193.67px;font-size:12.3px;color:#217346;font-weight:400;-webkit-text-stroke:0.1px currentColor;">C</div>
<div class="t" style="left:175.00px;width:300px;text-align:center;top:193.67px;font-size:12.3px;color:#217346;font-weight:400;-webkit-text-stroke:0.1px currentColor;">D</div>
<div class="t" style="left:249.95px;width:300px;text-align:center;top:193.67px;font-size:12.3px;color:#444;font-weight:400;-webkit-text-stroke:0.1px currentColor;">E</div>
<div class="t" style="left:324.85px;width:300px;text-align:center;top:193.67px;font-size:12.3px;color:#444;font-weight:400;-webkit-text-stroke:0.1px currentColor;">F</div>
<div class="t" style="left:399.75px;width:300px;text-align:center;top:193.67px;font-size:12.3px;color:#444;font-weight:400;-webkit-text-stroke:0.1px currentColor;">G</div>
<div class="t" style="left:474.65px;width:300px;text-align:center;top:193.67px;font-size:12.3px;color:#444;font-weight:400;-webkit-text-stroke:0.1px currentColor;">H</div>
<div class="t" style="left:549.55px;width:300px;text-align:center;top:193.67px;font-size:12.3px;color:#444;font-weight:400;-webkit-text-stroke:0.1px currentColor;">I</div>
<div class="t" style="left:624.45px;width:300px;text-align:center;top:193.67px;font-size:12.3px;color:#444;font-weight:400;-webkit-text-stroke:0.1px currentColor;">J</div>
<div class="t" style="left:699.35px;width:300px;text-align:center;top:193.67px;font-size:12.3px;color:#444;font-weight:400;-webkit-text-stroke:0.1px currentColor;">K</div>
<div class="t" style="left:774.25px;width:300px;text-align:center;top:193.67px;font-size:12.3px;color:#444;font-weight:400;-webkit-text-stroke:0.1px currentColor;">L</div>
<div class="t" style="left:849.15px;width:300px;text-align:center;top:193.67px;font-size:12.3px;color:#444;font-weight:400;-webkit-text-stroke:0.1px currentColor;">M</div>
<div class="t" style="left:924.05px;width:300px;text-align:center;top:193.67px;font-size:12.3px;color:#444;font-weight:400;-webkit-text-stroke:0.1px currentColor;">N</div>
<div class="t" style="left:998.95px;width:300px;text-align:center;top:193.67px;font-size:12.3px;color:#444;font-weight:400;-webkit-text-stroke:0.1px currentColor;">O</div>
<div class="t" style="left:1074.20px;width:300px;text-align:center;top:193.67px;font-size:12.3px;color:#444;font-weight:400;-webkit-text-stroke:0.1px currentColor;">P</div>
<div class="t" style="left:-8.00px;width:40px;text-align:center;top:213.05px;font-size:12.3px;color:#217346;font-weight:400;-webkit-text-stroke:0.1px currentColor;">1</div>
<div class="t" style="left:-8.00px;width:40px;text-align:center;top:231.80px;font-size:12.3px;color:#217346;font-weight:400;-webkit-text-stroke:0.1px currentColor;">2</div>
<div class="t" style="left:-8.00px;width:40px;text-align:center;top:250.55px;font-size:12.3px;color:#217346;font-weight:400;-webkit-text-stroke:0.1px currentColor;">3</div>
<div class="t" style="left:-8.00px;width:40px;text-align:center;top:269.30px;font-size:12.3px;color:#217346;font-weight:400;-webkit-text-stroke:0.1px currentColor;">4</div>
<div class="t" style="left:-8.00px;width:40px;text-align:center;top:288.05px;font-size:12.3px;color:#217346;font-weight:400;-webkit-text-stroke:0.1px currentColor;">5</div>
<div class="t" style="left:-8.00px;width:40px;text-align:center;top:306.80px;font-size:12.3px;color:#217346;font-weight:400;-webkit-text-stroke:0.1px currentColor;">6</div>
<div class="t" style="left:-8.00px;width:40px;text-align:center;top:325.55px;font-size:12.3px;color:#217346;font-weight:400;-webkit-text-stroke:0.1px currentColor;">7</div>
<div class="t" style="left:-8.00px;width:40px;text-align:center;top:344.30px;font-size:12.3px;color:#217346;font-weight:400;-webkit-text-stroke:0.1px currentColor;">8</div>
<div class="t" style="left:-8.00px;width:40px;text-align:center;top:363.05px;font-size:12.3px;color:#217346;font-weight:400;-webkit-text-stroke:0.1px currentColor;">9</div>
<div class="t" style="left:-8.00px;width:40px;text-align:center;top:381.80px;font-size:12.3px;color:#217346;font-weight:400;-webkit-text-stroke:0.1px currentColor;">10</div>
<div class="t" style="left:-8.00px;width:40px;text-align:center;top:400.55px;font-size:12.3px;color:#217346;font-weight:400;-webkit-text-stroke:0.1px currentColor;">11</div>
<div class="t" style="left:-8.00px;width:40px;text-align:center;top:419.30px;font-size:12.3px;color:#217346;font-weight:400;-webkit-text-stroke:0.1px currentColor;">12</div>
<div class="t" style="left:-8.00px;width:40px;text-align:center;top:438.05px;font-size:12.3px;color:#217346;font-weight:400;-webkit-text-stroke:0.1px currentColor;">13</div>
<div class="t" style="left:-8.00px;width:40px;text-align:center;top:456.80px;font-size:12.3px;color:#217346;font-weight:400;-webkit-text-stroke:0.1px currentColor;">14</div>
<div class="t" style="left:-8.00px;width:40px;text-align:center;top:475.55px;font-size:12.3px;color:#444;font-weight:400;-webkit-text-stroke:0.1px currentColor;">15</div>
<div class="t" style="left:-8.00px;width:40px;text-align:center;top:494.30px;font-size:12.3px;color:#444;font-weight:400;-webkit-text-stroke:0.1px currentColor;">16</div>
<div class="t" style="left:-8.00px;width:40px;text-align:center;top:513.05px;font-size:12.3px;color:#444;font-weight:400;-webkit-text-stroke:0.1px currentColor;">17</div>
<div class="t" style="left:-8.00px;width:40px;text-align:center;top:531.80px;font-size:12.3px;color:#444;font-weight:400;-webkit-text-stroke:0.1px currentColor;">18</div>
<div class="t" style="left:-8.00px;width:40px;text-align:center;top:550.55px;font-size:12.3px;color:#444;font-weight:400;-webkit-text-stroke:0.1px currentColor;">19</div>
<div class="t" style="left:-8.00px;width:40px;text-align:center;top:569.30px;font-size:12.3px;color:#444;font-weight:400;-webkit-text-stroke:0.1px currentColor;">20</div>
<div class="t" style="left:-8.00px;width:40px;text-align:center;top:588.05px;font-size:12.3px;color:#444;font-weight:400;-webkit-text-stroke:0.1px currentColor;">21</div>
<div class="t" style="left:-8.00px;width:40px;text-align:center;top:606.80px;font-size:12.3px;color:#444;font-weight:400;-webkit-text-stroke:0.1px currentColor;">22</div>
<div class="t" style="left:-8.00px;width:40px;text-align:center;top:625.55px;font-size:12.3px;color:#444;font-weight:400;-webkit-text-stroke:0.1px currentColor;">23</div>
<div class="t" style="left:80.50px;width:300px;text-align:center;top:212.58px;font-size:12.9px;color:#111111;font-weight:400;">Vente 2015 en €</div>
<div class="t" style="left:101px;top:231.33px;font-size:12.9px;color:#111111;font-weight:400;">Héloïse</div>
<div class="t" style="left:200px;top:231.33px;font-size:12.9px;color:#111111;font-weight:400;">Virginie</div>
<div class="t" style="left:289.5px;top:231.33px;font-size:12.9px;color:#111111;font-weight:400;">Annie</div>
<div class="t" style="left:26px;top:250.08px;font-size:12.9px;color:#111111;font-weight:400;">Janvier</div>
<div class="t" style="left:-118.70px;width:300px;text-align:right;top:250.66px;font-size:12.6px;color:#111111;font-weight:400;letter-spacing:-0.3px;">213 921</div>
<div class="t" style="left:-29.70px;width:300px;text-align:right;top:250.66px;font-size:12.6px;color:#111111;font-weight:400;letter-spacing:-0.3px;">234 671</div>
<div class="t" style="left:46.30px;width:300px;text-align:right;top:250.66px;font-size:12.6px;color:#111111;font-weight:400;letter-spacing:-0.3px;">269 680</div>
<div class="t" style="left:26px;top:268.83px;font-size:12.9px;color:#111111;font-weight:400;">Février</div>
<div class="t" style="left:-118.70px;width:300px;text-align:right;top:269.41px;font-size:12.6px;color:#111111;font-weight:400;letter-spacing:-0.3px;">194 507</div>
<div class="t" style="left:-29.70px;width:300px;text-align:right;top:269.41px;font-size:12.6px;color:#111111;font-weight:400;letter-spacing:-0.3px;">192 756</div>
<div class="t" style="left:46.30px;width:300px;text-align:right;top:269.41px;font-size:12.6px;color:#111111;font-weight:400;letter-spacing:-0.3px;">206 140</div>
<div class="t" style="left:26px;top:287.58px;font-size:12.9px;color:#111111;font-weight:400;">Mars</div>
<div class="t" style="left:-118.70px;width:300px;text-align:right;top:288.16px;font-size:12.6px;color:#111111;font-weight:400;letter-spacing:-0.3px;">192 147</div>
<div class="t" style="left:-29.70px;width:300px;text-align:right;top:288.16px;font-size:12.6px;color:#111111;font-weight:400;letter-spacing:-0.3px;">193 876</div>
<div class="t" style="left:46.30px;width:300px;text-align:right;top:288.16px;font-size:12.6px;color:#111111;font-weight:400;letter-spacing:-0.3px;">202 019</div>
<div class="t" style="left:26px;top:306.33px;font-size:12.9px;color:#111111;font-weight:400;">Avril</div>
<div class="t" style="left:-118.70px;width:300px;text-align:right;top:306.91px;font-size:12.6px;color:#111111;font-weight:400;letter-spacing:-0.3px;">193 127</div>
<div class="t" style="left:-29.70px;width:300px;text-align:right;top:306.91px;font-size:12.6px;color:#111111;font-weight:400;letter-spacing:-0.3px;">196 990</div>
<div class="t" style="left:46.30px;width:300px;text-align:right;top:306.91px;font-size:12.6px;color:#111111;font-weight:400;letter-spacing:-0.3px;">229 488</div>
<div class="t" style="left:26px;top:325.08px;font-size:12.9px;color:#111111;font-weight:400;">Mai</div>
<div class="t" style="left:-118.70px;width:300px;text-align:right;top:325.66px;font-size:12.6px;color:#111111;font-weight:400;letter-spacing:-0.3px;">207 804</div>
<div class="t" style="left:-29.70px;width:300px;text-align:right;top:325.66px;font-size:12.6px;color:#111111;font-weight:400;letter-spacing:-0.3px;">221 311</div>
<div class="t" style="left:46.30px;width:300px;text-align:right;top:325.66px;font-size:12.6px;color:#111111;font-weight:400;letter-spacing:-0.3px;">229 049</div>
<div class="t" style="left:26px;top:343.83px;font-size:12.9px;color:#111111;font-weight:400;">Juin</div>
<div class="t" style="left:-118.70px;width:300px;text-align:right;top:344.41px;font-size:12.6px;color:#111111;font-weight:400;letter-spacing:-0.3px;">195 640</div>
<div class="t" style="left:-29.70px;width:300px;text-align:right;top:344.41px;font-size:12.6px;color:#111111;font-weight:400;letter-spacing:-0.3px;">206 205</div>
<div class="t" style="left:46.30px;width:300px;text-align:right;top:344.41px;font-size:12.6px;color:#111111;font-weight:400;letter-spacing:-0.3px;">216 431</div>
<div class="t" style="left:26px;top:362.58px;font-size:12.9px;color:#111111;font-weight:400;">Juillet</div>
<div class="t" style="left:-118.70px;width:300px;text-align:right;top:363.16px;font-size:12.6px;color:#111111;font-weight:400;letter-spacing:-0.3px;">202 572</div>
<div class="t" style="left:-29.70px;width:300px;text-align:right;top:363.16px;font-size:12.6px;color:#111111;font-weight:400;letter-spacing:-0.3px;">207 029</div>
<div class="t" style="left:46.30px;width:300px;text-align:right;top:363.16px;font-size:12.6px;color:#111111;font-weight:400;letter-spacing:-0.3px;">217 815</div>
<div class="t" style="left:26px;top:381.33px;font-size:12.9px;color:#111111;font-weight:400;">Août</div>
<div class="t" style="left:-118.70px;width:300px;text-align:right;top:381.91px;font-size:12.6px;color:#111111;font-weight:400;letter-spacing:-0.3px;">185 567</div>
<div class="t" style="left:-29.70px;width:300px;text-align:right;top:381.91px;font-size:12.6px;color:#111111;font-weight:400;letter-spacing:-0.3px;">198 371</div>
<div class="t" style="left:46.30px;width:300px;text-align:right;top:381.91px;font-size:12.6px;color:#111111;font-weight:400;letter-spacing:-0.3px;">217 870</div>
<div class="t" style="left:26px;top:400.08px;font-size:12.9px;color:#111111;font-weight:400;">Septembre</div>
<div class="t" style="left:-118.70px;width:300px;text-align:right;top:400.66px;font-size:12.6px;color:#111111;font-weight:400;letter-spacing:-0.3px;">191 328</div>
<div class="t" style="left:-29.70px;width:300px;text-align:right;top:400.66px;font-size:12.6px;color:#111111;font-weight:400;letter-spacing:-0.3px;">210 269</div>
<div class="t" style="left:46.30px;width:300px;text-align:right;top:400.66px;font-size:12.6px;color:#111111;font-weight:400;letter-spacing:-0.3px;">210 262</div>
<div class="t" style="left:26px;top:418.83px;font-size:12.9px;color:#111111;font-weight:400;">Octobre</div>
<div class="t" style="left:-118.70px;width:300px;text-align:right;top:419.41px;font-size:12.6px;color:#111111;font-weight:400;letter-spacing:-0.3px;">196 502</div>
<div class="t" style="left:-29.70px;width:300px;text-align:right;top:419.41px;font-size:12.6px;color:#111111;font-weight:400;letter-spacing:-0.3px;">197 485</div>
<div class="t" style="left:46.30px;width:300px;text-align:right;top:419.41px;font-size:12.6px;color:#111111;font-weight:400;letter-spacing:-0.3px;">202 966</div>
<div class="t" style="left:26px;top:437.58px;font-size:12.9px;color:#111111;font-weight:400;">Novembre</div>
<div class="t" style="left:-118.70px;width:300px;text-align:right;top:438.16px;font-size:12.6px;color:#111111;font-weight:400;letter-spacing:-0.3px;">203 879</div>
<div class="t" style="left:-29.70px;width:300px;text-align:right;top:438.16px;font-size:12.6px;color:#111111;font-weight:400;letter-spacing:-0.3px;">204 898</div>
<div class="t" style="left:46.30px;width:300px;text-align:right;top:438.16px;font-size:12.6px;color:#111111;font-weight:400;letter-spacing:-0.3px;">239 215</div>
<div class="t" style="left:26px;top:456.33px;font-size:12.9px;color:#111111;font-weight:400;">Décembre</div>
<div class="t" style="left:-118.70px;width:300px;text-align:right;top:456.91px;font-size:12.6px;color:#111111;font-weight:400;letter-spacing:-0.3px;">203 358</div>
<div class="t" style="left:-29.70px;width:300px;text-align:right;top:456.91px;font-size:12.6px;color:#111111;font-weight:400;letter-spacing:-0.3px;">202 120</div>
<div class="t" style="left:46.30px;width:300px;text-align:right;top:456.91px;font-size:12.6px;color:#111111;font-weight:400;letter-spacing:-0.3px;">204 818</div>
<div class="r" style="left:23px;top:208.5px;width:340px;height:264.5px;background:transparent;box-sizing:border-box;border:2px solid #217346;"></div>
<div class="r" style="left:360px;top:469.5px;width:5px;height:5px;background:#217346;border:1px solid #fff;box-sizing:content-box;left:359px;top:468.5px;"></div>
<div class="r" style="left:1261px;top:191.5px;width:19px;height:453.5px;background:#E6E6E6;"></div>
<div class="r" style="left:1263.5px;top:193.5px;width:13px;height:14px;background:#FFFFFF;box-sizing:border-box;border:1px solid #C6C6C6;"></div>
<svg class="r" style="left:1266.5px;top:198px" width="7" height="4" viewBox="0 0 7 4"><path d="M0 4L3.5 0 7 4z" fill="#555"/></svg>
<div class="r" style="left:1263.5px;top:208px;width:13px;height:424px;background:#DADADA;"></div>
<div class="r" style="left:1263.5px;top:208px;width:13px;height:404.5px;background:#FFFFFF;box-sizing:border-box;border:1px solid #C6C6C6;"></div>
<div class="r" style="left:1263.5px;top:632px;width:13px;height:13px;background:#FFFFFF;box-sizing:border-box;border:1px solid #C6C6C6;"></div>
<svg class="r" style="left:1266.5px;top:637px" width="7" height="4" viewBox="0 0 7 4"><path d="M0 0h7L3.5 4z" fill="#555"/></svg>
<div class="r" style="left:0px;top:645px;width:1280px;height:27px;background:#E6E6E6;"></div>
<div class="r" style="left:0px;top:644.5px;width:1261px;height:1px;background:#ABABAB;"></div>
<svg class="r" style="left:25px;top:654px" width="5" height="8" viewBox="0 0 5 8"><path d="M4.5 0.5L0.5 4 4.5 7.5z" fill="#C4C4C4"/></svg>
<svg class="r" style="left:51.5px;top:654px" width="5" height="8" viewBox="0 0 5 8"><path d="M0.5 0.5L4.5 4 0.5 7.5z" fill="#C4C4C4"/></svg>
<div class="r" style="left:93.7px;top:649px;width:1.2px;height:18px;background:#A8A8A8;"></div>
<div class="t" style="left:107px;top:651.39px;font-size:12.6px;color:#444;font-weight:400;">Histogramme</div>
<div class="r" style="left:195.5px;top:645px;width:107px;height:22.5px;background:#FFFFFF;"></div>
<div class="r" style="left:195.5px;top:666px;width:107px;height:2px;background:#217346;"></div>
<div class="t" style="left:207px;top:651.64px;font-size:12.2px;color:#217346;font-weight:700;">Tuyaux orgues</div>
<svg class="r" style="left:333px;top:650.5px" width="16" height="16" viewBox="0 0 16 16"><circle cx="8" cy="8" r="6.7" fill="none" stroke="#777" stroke-width="1.3"/><path d="M8 4.3v7.4M4.3 8h7.4" stroke="#777" stroke-width="1.4"/></svg>
<div class="r" style="left:767px;top:653.3px;width:1.4px;height:1.4px;background:#A0A0A0;"></div>
<div class="r" style="left:767px;top:657.3px;width:1.4px;height:1.4px;background:#A0A0A0;"></div>
<div class="r" style="left:767px;top:661.3px;width:1.4px;height:1.4px;background:#A0A0A0;"></div>
<div class="r" style="left:783px;top:651.5px;width:479px;height:14.5px;background:#DADADA;"></div>
<div class="r" style="left:783.5px;top:651.5px;width:14px;height:14px;background:#FFFFFF;box-sizing:border-box;border:1px solid #C6C6C6;"></div>
<svg class="r" style="left:788px;top:655px" width="5" height="7" viewBox="0 0 5 7"><path d="M4.5 0L0.5 3.5 4.5 7z" fill="#555"/></svg>
<div class="r" style="left:797px;top:651.5px;width:419px;height:14.5px;background:#FFFFFF;box-sizing:border-box;border:1px solid #C6C6C6;"></div>
<div class="r" style="left:1246.5px;top:651.5px;width:14px;height:14px;background:#FFFFFF;box-sizing:border-box;border:1px solid #C6C6C6;"></div>
<svg class="r" style="left:1252px;top:655px" width="5" height="7" viewBox="0 0 5 7"><path d="M0.5 0L4.5 3.5 0.5 7z" fill="#555"/></svg>
<div class="r" style="left:0px;top:672px;width:1280px;height:20px;background:#F0F0F0;"></div>
<div class="r" style="left:0px;top:670.8px;width:1280px;height:1.2px;background:#C8C8C8;"></div>
<div class="r" style="left:0px;top:690.5px;width:1280px;height:1.5px;background:#F8F8F8;"></div>
<div class="t" style="left:7px;top:675.76px;font-size:10.55px;color:#444;font-weight:400;">Prêt</div>
<div class="t" style="left:652px;top:675.76px;font-size:10.55px;color:#444;font-weight:400;">Moyenne : 208113,531</div>
<div class="t" style="left:779px;top:675.76px;font-size:10.55px;color:#444;font-weight:400;">Nb (non vides) : 52</div>
<div class="t" style="left:884px;top:675.76px;font-size:10.55px;color:#444;font-weight:400;">Somme : 7492087,117</div>
<div class="r" style="left:1004px;top:672px;width:35px;height:20px;background:#D0D0D0;"></div>
<svg class="r" style="left:1014px;top:674.5px" width="13" height="13" viewBox="0 0 13 13"><path d="M0.6 0.6h11.8v11.8H0.6zM4.5 0.6v11.8M8.5 0.6v11.8M0.6 4.5h11.8M0.6 8.5h11.8" fill="none" stroke="#6A6A6A" stroke-width="1.2"/></svg>
<svg class="r" style="left:1050px;top:675px" width="14" height="13" viewBox="0 0 14 13"><rect x="0.6" y="0.6" width="12.8" height="11.8" fill="none" stroke="#6A6A6A" stroke-width="1.2"/><rect x="3.5" y="3" width="7" height="7" fill="none" stroke="#6A6A6A" stroke-width="1"/><path d="M5 5h4M5 7h4" stroke="#6A6A6A" stroke-width="0.8"/></svg>
<svg class="r" style="left:1086px;top:674.5px" width="14" height="13" viewBox="0 0 14 13"><path d="M0.6 0.6h12.8v11.8H0.6zM4.5 0.6v7.5h8.9M8.5 0.6v7.5" fill="none" stroke="#6A6A6A" stroke-width="1.2"/></svg>
<div class="r" style="left:1114px;top:680.3px;width:6.5px;height:2px;background:#555;"></div>
<div class="r" style="left:1125px;top:681px;width:94px;height:1px;background:#A8A8A8;"></div>
<div class="r" style="left:1169.5px;top:676px;width:3px;height:10px;background:#555;"></div>
<div class="r" style="left:1221.5px;top:680.3px;width:8.5px;height:2px;background:#555;"></div>
<div class="r" style="left:1224.75px;top:677px;width:2px;height:8.5px;background:#555;"></div>
<div class="t" style="left:1192.00px;width:80px;text-align:right;top:675.76px;font-size:10.55px;color:#444;font-weight:400;">100 %</div>
<div class="r" style="left:0px;top:692px;width:1280px;height:28px;background:#232323;"></div>
<div class="t" style="left:390.50px;width:500px;text-align:center;top:698.34px;font-size:18.0px;color:#F0F0F0;font-weight:400;">http://www.sciencesdegestion.fr</div>
</body></html>
